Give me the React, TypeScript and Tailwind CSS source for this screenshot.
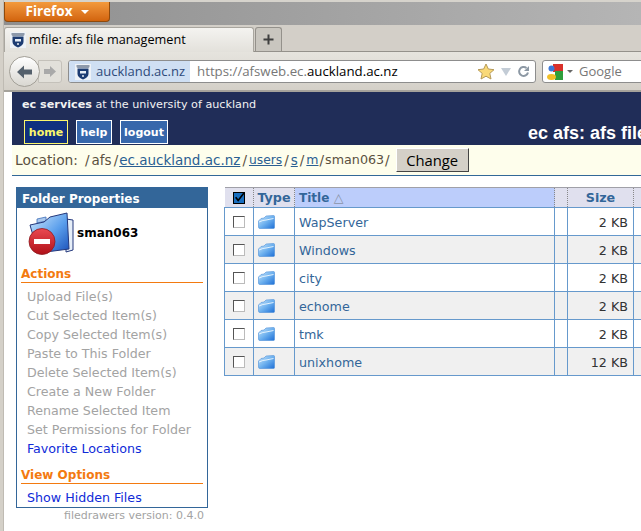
import React from 'react';

const Crest = ({ size = 16 }: { size?: number }) => (
  <svg width={size} height={size} viewBox="0 0 16 16" className="shrink-0">
    <rect width="16" height="16" fill="#eef2f7" />
    <path d="M1.500 1h13v2l-1 1H2.500l-1-1z" fill="#8d99ab" />
    <path d="M2.500 4.500h11V10c0 2.500-2.500 4.500-5.500 5.500C5 14.500 2.500 12.500 2.500 10z" fill="#1d3c72" />
    <path d="M5 7h6v2.500H5z" fill="#e8eef5" />
    <circle cx="8" cy="12" r="1" fill="#e8eef5" />
  </svg>
);

const FolderSmall = () => (
  <svg width="17" height="14" viewBox="0 0 17 14" className="block">
    <defs>
      <linearGradient id="fs" x1="0" y1="0" x2="1" y2="1">
        <stop offset="0" stopColor="#cfe8fb" />
        <stop offset="0.5" stopColor="#6fb2ef" />
        <stop offset="1" stopColor="#1e6fd6" />
      </linearGradient>
    </defs>
    <path d="M3 3.500 L6 3 L8 1 L15.500 0.500 Q16.500 0.500 16.500 1.500 V12.500 Q16.500 13.500 15.500 13.500 H2 Q0.500 13.500 0.500 12 V6 Z" fill="url(#fs)" stroke="#4b8fd8" strokeWidth="0.6" />
    <path d="M1 7 Q5 5 8 5 L15.500 3.500" fill="none" stroke="#eef8ff" strokeWidth="0.9" />
  </svg>
);

const FolderLarge = () => (
  <svg width="46" height="44" viewBox="0 0 46 44" className="block">
    <defs>
      <linearGradient id="fl" x1="0" y1="0" x2="1" y2="1">
        <stop offset="0" stopColor="#d5ecfd" />
        <stop offset="0.55" stopColor="#5b9fec" />
        <stop offset="1" stopColor="#1a4fb8" />
      </linearGradient>
      <linearGradient id="red" x1="0" y1="0" x2="0" y2="1">
        <stop offset="0" stopColor="#ea4a52" />
        <stop offset="1" stopColor="#b01018" />
      </linearGradient>
    </defs>
    <path d="M38 7 L45 8 V38 L38 40 Z" fill="#e6eef8" stroke="#24387c" strokeWidth="1" />
    <path d="M9 7 L18 5 V9 L9 11 Z" fill="#a9c8ee" stroke="#3f6fb8" strokeWidth="0.8" />
    <path d="M2 13 L16 10 L22 5 L39 1 L41 37 L10 41 Z" fill="url(#fl)" stroke="#24387c" strokeWidth="1" />
    <circle cx="14" cy="29.500" r="13" fill="url(#red)" stroke="#8d1a20" strokeWidth="0.8" />
    <rect x="6" y="27" width="16" height="5" fill="#fff" />
  </svg>
);

const Star = () => (
  <svg width="18" height="17" viewBox="0 0 18 17">
    <path
      d="M9 1 L11.300 6 L17 6.700 L12.800 10.400 L14 16 L9 13.200 L4 16 L5.200 10.400 L1 6.700 L6.700 6 Z"
      fill="#f9d978"
      stroke="#b59a5a"
      strokeWidth="1"
    />
  </svg>
);

const GoogleIcon = () => (
  <svg width="16" height="16" viewBox="0 0 16 16">
    <path d="M6 0h10v8H6z" fill="#d9302a" />
    <path d="M8 7h8v9H8z" fill="#2f9e3c" />
    <circle cx="4.500" cy="4.500" r="3" fill="#3c78d8" />
    <ellipse cx="4.500" cy="13" rx="4.500" ry="3" fill="#f2bf27" />
  </svg>
);

const actions = [
  'Upload File(s)',
  'Cut Selected Item(s)',
  'Copy Selected Item(s)',
  'Paste to This Folder',
  'Delete Selected Item(s)',
  'Create a New Folder',
  'Rename Selected Item',
  'Set Permissions for Folder',
];

const files = [
  { name: 'WapServer', size: '2 KB' },
  { name: 'Windows', size: '2 KB' },
  { name: 'city', size: '2 KB' },
  { name: 'echome', size: '2 KB' },
  { name: 'tmk', size: '2 KB' },
  { name: 'unixhome', size: '12 KB' },
];

export default function App() {
  return (
    <div className="w-[641px] h-[531px] overflow-hidden flex bg-[#d4d0c8] font-['DejaVu_Sans',sans-serif] text-[13px]">
      <div className="w-[4px] shrink-0 bg-[#d4d0c8] border-r border-[#bfbbb3]" />
      <div className="flex-1 min-w-0 flex flex-col">
        {/* title bar */}
        <div className="h-[2px] shrink-0 bg-[#d6d3cc]" />
        <div className="h-[23px] bg-gradient-to-r from-[#8f8f8f] to-[#b5b5b5] shrink-0">
          <div className="w-[106px] h-[20px] rounded-b-[4px] border border-t-0 border-[#8f4a0c] bg-gradient-to-b from-[#f39a3c] to-[#d2640c] flex items-center justify-center gap-[8px] text-white font-bold text-[13.500px] font-['Open_Sans',sans-serif]">
            <span>Firefox</span>
            <span className="w-0 h-0 border-x-[4px] border-x-transparent border-t-[4px] border-t-white" />
          </div>
        </div>
        {/* tab bar */}
        <div className="h-[27px] shrink-0 bg-[#d3cfc8] flex items-end gap-[1px] border-b border-[#94918b]">
          <div className="w-[250px] h-[25px] -mb-[1px] bg-gradient-to-b from-[#f4f3f0] to-[#e3e1db] border border-b-0 border-[#a9a69f] rounded-t-[3px] flex items-center gap-[3px] pl-[5px] font-['Open_Sans',sans-serif] text-[12.700px] text-black">
            <Crest />
            <span className="whitespace-nowrap">mfile: afs file management</span>
          </div>
          <div className="w-[27px] h-[24px] bg-[#c9c6bf] border border-b-0 border-[#94918b] rounded-t-[3px] flex items-center justify-center text-[#444]">
            <svg width="11" height="11" viewBox="0 0 11 11">
              <path d="M5.500 0.500V10.500M0.500 5.500H10.500" stroke="#3f3f3f" strokeWidth="2" />
            </svg>
          </div>
        </div>
        {/* nav bar */}
        <div className="h-[40px] shrink-0 pt-[1px] bg-gradient-to-b from-[#e6e4de] to-[#d4d0c8] border-b-2 border-[#a5a29b] flex items-center pl-[5px] font-['Open_Sans',sans-serif]">
          <div className="flex items-center shrink-0 w-[59px]">
            <div className="w-[31px] h-[31px] rounded-full bg-gradient-to-b from-white to-[#d9d7d1] border border-[#a3a098] flex items-center justify-center z-10 shrink-0">
              <svg width="18" height="16" viewBox="0 0 18 16">
                <path d="M1 8 L8 1.500 V5.500 H16 V10.500 H8 V14.500 Z" fill="#54606c" />
              </svg>
            </div>
            <div className="w-[24px] h-[23px] -ml-[2px] bg-[#e2e0da] border border-[#c4c1ba] rounded-r-[3px] flex items-center justify-center shrink-0">
              <svg width="14" height="13" viewBox="0 0 14 13">
                <path d="M13 6.500 L7 1 V4 H1 V9 H7 V12 Z" fill="#a9a9a9" />
              </svg>
            </div>
          </div>
          <div className="w-[468px] h-[23px] shrink-0 flex items-center bg-white border border-[#8d8d8d] rounded-[3px] text-[13px] overflow-hidden">
            <div className="h-full flex items-center gap-[5px] pl-[6px] pr-[5px] bg-[#cfdff3] text-[#2e4a7a] whitespace-nowrap">
              <Crest />
              <span>auckland.ac.nz</span>
            </div>
            <div className="pl-[7px] flex-1 whitespace-nowrap text-[#777] text-[13.250px]">
              https://afsweb.ec.<span className="text-black">auckland.ac.nz</span>
            </div>
            <div className="flex items-center gap-[6px] pr-[5px]">
              <Star />
              <span className="w-0 h-0 border-x-[5px] border-x-transparent border-t-[8px] border-t-[#c3ccd6]" />
              <svg width="13" height="13" viewBox="0 0 13 13">
                <path d="M11 7.500A4.500 4.500 0 1 1 9.500 3" fill="none" stroke="#8c98a4" strokeWidth="2" />
                <path d="M12 1v5H7z" fill="#8c98a4" />
              </svg>
            </div>
          </div>
          <div className="ml-[6px] flex-1 h-[23px] -mr-[20px] flex items-center gap-[4px] pl-[4px] bg-white border border-[#8d8d8d] rounded-l-[3px] text-[13px] text-[#777]">
            <GoogleIcon />
            <span className="w-0 h-0 border-x-[3px] border-x-transparent border-t-[3px] border-t-[#666]" />
            <span className="ml-[2px]">Google</span>
          </div>
        </div>
        {/* page */}
        <div className="flex-1 min-h-0 bg-white pl-[8px]">
          <div className="h-[53px] bg-[#202d58] text-white flex flex-col justify-between overflow-hidden">
            <div className="pl-[10px] pt-[4px] text-[11.200px] text-[#f2f2f2] leading-[18px]">
              <b>ec services</b> at the university of auckland
            </div>
            <div className="flex items-end justify-between pl-[12px] pb-[1px] whitespace-nowrap">
              <div className="flex gap-[8px] text-[11px] font-bold leading-none">
                <span className="h-[24px] w-[44px] flex items-center justify-center bg-[#10307f] border border-[#fbf66c] text-[#fbf66c]">home</span>
                <span className="h-[24px] w-[36px] flex items-center justify-center bg-[#3767ab] border border-white">help</span>
                <span className="h-[24px] w-[48px] flex items-center justify-center bg-[#3767ab] border border-white">logout</span>
              </div>
              <div className="w-[113px] overflow-hidden font-bold text-[18px] font-['Liberation_Sans',sans-serif] leading-[22px]">ec afs: afs file management</div>
            </div>
          </div>
          <div className="h-[31px] bg-[#fefeec] border-b border-[#326898] flex items-center pl-[3px] text-[13.500px] text-[#5a5040] whitespace-nowrap">
            <span className="text-[13.800px]">Location:</span>
            <span className="ml-[7px]">/</span>
            <span className="mx-[2px]">afs</span>
            <span className="mr-[1px]">/</span>
            <span className="text-[#2a5f92] underline">ec.auckland.ac.nz</span>
            <span className="mx-[2px]">/</span>
            <span className="text-[#2a5f92] underline text-[12.300px]">users</span>
            <span className="mx-[2px]">/</span>
            <span className="text-[#2a5f92] underline">s</span>
            <span className="mx-[2px]">/</span>
            <span className="text-[#2a5f92] underline text-[12.500px]">m</span>
            <span className="mx-[1px]">/</span>
            <span className="text-[12.700px]">sman063</span>
            <span className="ml-[1px]">/</span>
            <span className="ml-[6px] w-[73px] h-[24px] bg-[#d4d0c8] border border-[#fff] border-r-[#444] border-b-[#444] flex items-center justify-center text-[14.800px] text-black font-['Open_Sans',sans-serif]">Change</span>
          </div>
          <div className="flex items-start pl-[4px] pt-[11px] gap-[16px]">
            {/* sidebar */}
            <div className="w-[192px] shrink-0">
              <div className="border border-[#336699] h-[321px]">
                <div className="h-[20px] bg-[#336699] text-white font-bold text-[12px] leading-[22px] pl-[5px]">Folder Properties</div>
                <div className="flex items-center gap-[3px] pl-[11px] pt-[4px] h-[48px]">
                  <FolderLarge />
                  <span className="font-bold text-[12px] text-black mb-[3px]">sman063</span>
                </div>
                <div className="px-[4px] mt-[11px]">
                  <div className="font-bold text-[#f37a10] text-[12px] leading-[15px] border-b border-[#f37a10]">Actions</div>
                  <ul className="pl-[6px] mt-[4px] text-[12.650px] leading-[19px] text-[#a3a3a3] whitespace-nowrap">
                    {actions.map((a) => (
                      <li key={a}>{a}</li>
                    ))}
                    <li className="text-[#0f2bd8]">Favorite Locations</li>
                  </ul>
                  <div className="font-bold text-[#f37a10] text-[12px] leading-[15px] border-b border-[#f37a10] mt-[10px]">View Options</div>
                  <div className="pl-[6px] mt-[4px] text-[12.650px] leading-[19px] text-[#0f2bd8]">Show Hidden Files</div>
                </div>
              </div>
              <div className="text-right pr-[4px] mt-[1px] text-[11px] leading-[14px] text-[#a3a3a3]">filedrawers version: 0.4.0</div>
            </div>
            {/* file table */}
            <table className="w-[430px] shrink-0 table-fixed border-collapse text-[12.700px] leading-[16px]">
              <thead>
                <tr className="h-[20px] border-t border-[#a0a0a8] border-b border-b-[#6699cc] text-[#336699] font-bold">
                  <th className="w-[29px] bg-[#e0e0ee] border-r border-dotted border-r-[#888] p-0">
                    <span className="mx-auto flex items-center justify-center w-[12px] h-[12px] bg-[#1a6fc0] border border-black">
                      <svg width="12" height="12" viewBox="0 0 12 12">
                        <path d="M2 5 L5 9 L12 0" fill="none" stroke="#000" strokeWidth="2" />
                      </svg>
                    </span>
                  </th>
                  <th className="w-[41px] bg-[#e0e0ee] border-r border-dotted border-r-[#888] p-0 pt-[1px] font-bold">Type</th>
                  <th className="w-[260px] bg-[#bccdfb] p-0 pl-[4px] pt-[1px] text-left font-bold">
                    <span className="text-[12px]">Title</span> <span className="font-normal text-[#8a93a8]">△</span>
                  </th>
                  <th className="w-[13px] bg-[#e0e0ee] border-x border-dotted border-x-[#888] p-0" />
                  <th className="w-[66px] bg-[#e0e0ee] border-r border-dotted border-r-[#888] p-0 pt-[1px] font-bold">Size</th>
                  <th className="bg-[#e0e0ee] p-0" />
                </tr>
              </thead>
              <tbody>
                {files.map((f, i) => (
                  <tr key={f.name} className={`h-[28px] border-b border-[#6699cc] ${i % 2 === 1 ? 'bg-[#f0f0f0]' : 'bg-white'}`}>
                    <td className="border-x border-[#6699cc] p-0">
                      <span className="block mx-auto w-[12px] h-[12px] bg-white border border-[#555] border-r-[#bbb] border-b-[#bbb]" />
                    </td>
                    <td className="border-r border-[#6699cc] p-0 pl-[4px]">
                      <FolderSmall />
                    </td>
                    <td className="border-r border-[#6699cc] p-0 pl-[4px] pt-[2px] text-[#336699]">{f.name}</td>
                    <td className="border-r border-[#6699cc] p-0" />
                    <td className="border-r border-[#6699cc] p-0 pr-[5px] pt-[2px] text-right text-[#333]">{f.size}</td>
                    <td className="p-0" />
                  </tr>
                ))}
              </tbody>
            </table>
          </div>
        </div>
      </div>
    </div>
  );
}
